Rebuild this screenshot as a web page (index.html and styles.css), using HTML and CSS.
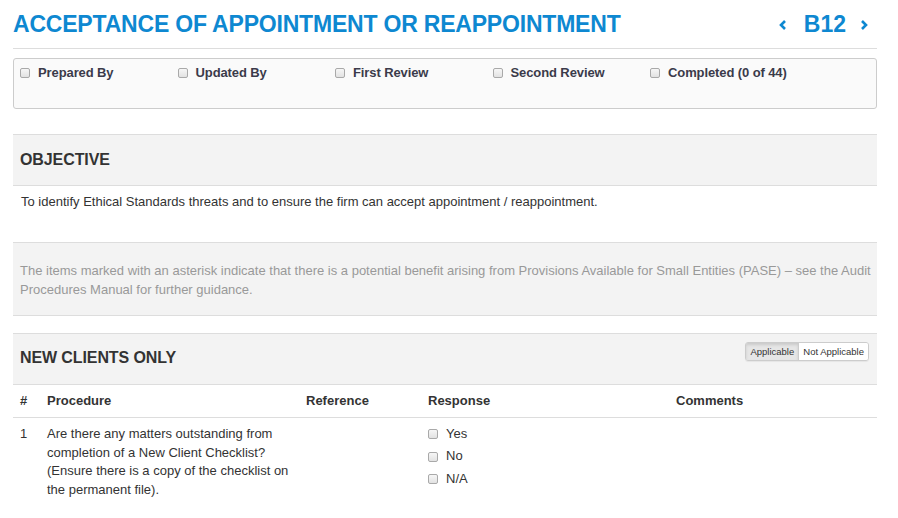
FILE: index.html
```html
<!DOCTYPE html>
<html>
<head>
<meta charset="utf-8">
<link rel="stylesheet" href="styles.css">
</head>
<body>
<div class="page">
  <header class="page-header">
    <h1 class="title">ACCEPTANCE OF APPOINTMENT OR REAPPOINTMENT</h1>
    <div class="nav">
      <svg class="chev chev-prev" width="10" height="12" viewBox="0 0 10 12"><polyline points="7,2 3,6 7,10" fill="none" stroke="#0e88d1" stroke-width="2.6"/></svg>
      <span class="code">B12</span>
      <svg class="chev" width="10" height="12" viewBox="0 0 10 12"><polyline points="3,2 7,6 3,10" fill="none" stroke="#0e88d1" stroke-width="2.6"/></svg>
    </div>
  </header>

  <div class="signoff">
    <label class="sign"><span class="cb"></span>Prepared By</label>
    <label class="sign"><span class="cb"></span>Updated By</label>
    <label class="sign"><span class="cb"></span>First Review</label>
    <label class="sign"><span class="cb"></span>Second Review</label>
    <label class="sign"><span class="cb"></span>Completed (0 of 44)</label>
  </div>

  <section class="panel panel-objective">
    <div class="panel-head"><h2>OBJECTIVE</h2></div>
    <div class="objective-text">To identify Ethical Standards threats and to ensure the firm can accept appointment / reappointment.</div>
    <div class="note">The items marked with an asterisk indicate that there is a potential benefit arising from Provisions Available for Small Entities (PASE) – see the Audit Procedures Manual for further guidance.</div>
  </section>

  <section class="panel panel-clients">
    <div class="panel-head">
      <h2>NEW CLIENTS ONLY</h2>
      <div class="btn-group">
        <span class="btn active">Applicable</span><span class="btn">Not Applicable</span>
      </div>
    </div>
    <div class="table">
      <div class="row head">
        <div>#</div><div>Procedure</div><div>Reference</div><div>Response</div><div>Comments</div>
      </div>
      <div class="row">
        <div>1</div>
        <div>Are there any matters outstanding from completion of a New Client Checklist? (Ensure there is a copy of the checklist on the permanent file).</div>
        <div></div>
        <div class="options">
          <label class="opt"><span class="cb"></span>Yes</label>
          <label class="opt"><span class="cb"></span>No</label>
          <label class="opt"><span class="cb"></span>N/A</label>
        </div>
        <div></div>
      </div>
    </div>
  </section>
</div>
</body>
</html>
```

FILE: styles.css
```css
* { box-sizing: border-box; }
html, body { margin: 0; padding: 0; background: #fff; }
body {
  font-family: "Liberation Sans", Arial, sans-serif;
  font-size: 13px;
  line-height: 1.42857;
  color: #333;
}
.page { padding: 0 21px 0 13px; }

.page-header {
  display: flex;
  align-items: center;
  justify-content: space-between;
  height: 49px;
  border-bottom: 1px solid #ddd;
  padding-top: 1px;
}
.title {
  margin: 0;
  font-size: 23px;
  letter-spacing: -0.2px;
  font-weight: bold;
  color: #0e88d1;
  line-height: 1;
  padding-bottom: 1px;
}
.nav {
  display: flex;
  align-items: center;
  gap: 13px;
  padding-right: 8px;
  color: #0e88d1;
}
.chev-prev { margin-right: 3px; }
.code { font-size: 23px; font-weight: bold; line-height: 1; }
.chev { display: block; }

.signoff {
  margin-top: 9px;
  height: 51px;
  border: 1px solid #ccc;
  border-radius: 3px;
  background: #fafafa;
  display: grid;
  grid-template-columns: repeat(5, 157.5px);
  padding: 5px 6px 0;
}
.sign {
  display: flex;
  align-items: center;
  font-weight: bold;
  color: #3b3b4a;
  height: 18px;
  letter-spacing: -0.1px;
}
.cb {
  display: inline-block;
  width: 10px;
  height: 10px;
  border: 1px solid #a9a9a9;
  border-radius: 2px;
  background: linear-gradient(#f6f6f6, #e2e2e2);
  margin-right: 8px;
  flex: none;
}

.panel { border-top: 1px solid #ddd; }
.panel-objective { margin-top: 25px; }
.panel-clients { margin-top: 17px; }

.panel-head {
  background: #f3f3f3;
  height: 51px;
  border-bottom: 1px solid #ddd;
  display: flex;
  align-items: center;
  justify-content: space-between;
  padding: 0 8px 0 7px;
}
.panel-head h2 {
  margin: 0;
  font-size: 16px;
  font-weight: bold;
  color: #333;
  line-height: 1;
  letter-spacing: -0.1px;
}
.panel-clients .panel-head h2 { padding-bottom: 2px; }

.objective-text {
  height: 57px;
  padding: 7px 8px 0;
  border-bottom: 1px solid #ddd;
}
.note {
  background: #f3f3f3;
  color: #999;
  height: 73px;
  padding: 19px 2px 0 7px;
  border-bottom: 1px solid #ddd;
}

.btn-group {
  display: flex;
  align-self: flex-start;
  margin-top: 8px;
  border: 1px solid #ccc;
  border-radius: 3px;
  overflow: hidden;
  box-shadow: 0 1px 1px rgba(0,0,0,0.06);
}
.btn {
  font-size: 9.5px;
  line-height: 17px;
  padding: 0 4px;
  background: #fff;
  color: #333;
}
.btn.active {
  background: #e6e6e6;
  box-shadow: inset 0 2px 3px rgba(0,0,0,0.12);
  border-right: 1px solid #ccc;
}

.row {
  display: grid;
  grid-template-columns: 27px 259px 122px 248px 1fr;
  padding: 0 7px;
}
.row.head {
  font-weight: bold;
  height: 33px;
  align-items: center;
  border-bottom: 1px solid #ddd;
}
.row:not(.head) { padding-top: 7px; }
.options { display: flex; flex-direction: column; gap: 4px; }
.opt { display: flex; align-items: center; height: 18.5px; }
```
